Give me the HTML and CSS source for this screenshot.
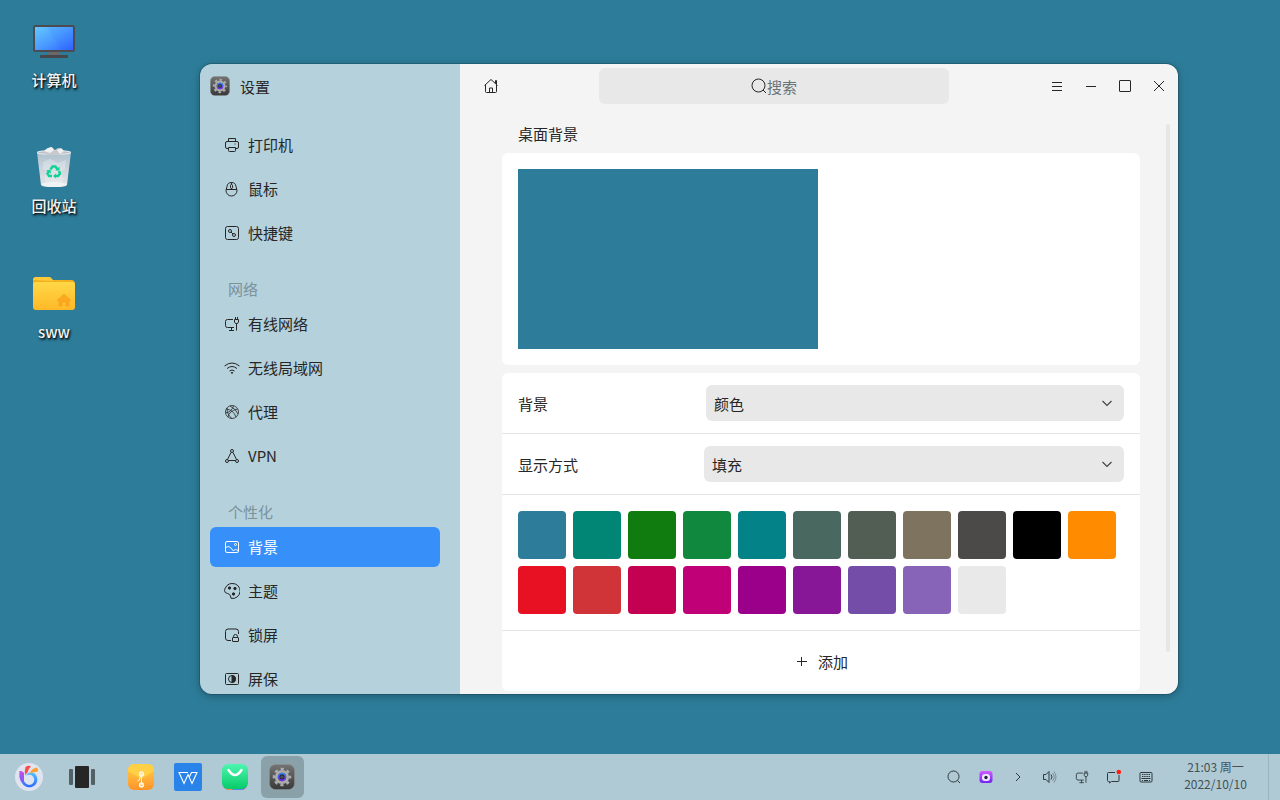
FILE: index.html
```html
<!DOCTYPE html>
<html lang="zh-CN">
<head>
<meta charset="utf-8">
<meta name="viewport" content="width=device-width, initial-scale=1">
<title>设置</title>
<link rel="stylesheet" href="styles.css">
</head>
<body>
<svg class="defs" width="0" height="0" aria-hidden="true">
  <defs>
    <linearGradient id="screen" x1="0" y1="0" x2="1" y2="1"><stop offset="0" stop-color="#66c8ff"/><stop offset=".5" stop-color="#4b9cff"/><stop offset="1" stop-color="#2f62ff"/></linearGradient>
    <linearGradient id="folder" x1="0" y1="0" x2="0" y2="1"><stop offset="0" stop-color="#ffd847"/><stop offset="1" stop-color="#ffb827"/></linearGradient>
    <linearGradient id="bin" x1="0" y1="0" x2="0" y2="1"><stop offset="0" stop-color="#a9bfcc"/><stop offset=".5" stop-color="#ccd4dc"/><stop offset="1" stop-color="#e4e6ea"/></linearGradient>
    <linearGradient id="plate" x1="0" y1="0" x2="0" y2="1"><stop offset="0" stop-color="#747474"/><stop offset="1" stop-color="#383838"/></linearGradient>
    <linearGradient id="lens" x1="0" y1="0" x2="0" y2="1"><stop offset="0" stop-color="#2e83ff"/><stop offset="1" stop-color="#7a2bff"/></linearGradient>
    <linearGradient id="shop" x1="0" y1="0" x2="0" y2="1"><stop offset="0" stop-color="#4ef5b0"/><stop offset="1" stop-color="#07cb69"/></linearGradient>
    <linearGradient id="cam" x1="0" y1="0" x2="0" y2="1"><stop offset="0" stop-color="#cf5cff"/><stop offset="1" stop-color="#7222ee"/></linearGradient>
    <linearGradient id="files" x1="0" y1="0" x2="0" y2="1"><stop offset="0" stop-color="#ffd34a"/><stop offset="1" stop-color="#ff9329"/></linearGradient>
    <linearGradient id="swirl" x1="0" y1="0" x2="0" y2="1"><stop offset="0" stop-color="#55c6ff"/><stop offset="1" stop-color="#2a67ff"/></linearGradient>
    <linearGradient id="petal" x1="0" y1="0" x2="0" y2="1"><stop offset="0" stop-color="#c64be8"/><stop offset="1" stop-color="#4f6bff"/></linearGradient>
    <symbol id="gear-app" viewBox="0 0 26 26">
      <rect x=".5" y=".5" width="25" height="25" rx="6" fill="url(#plate)" stroke="#8c8c8c" stroke-opacity=".6"/>
      <circle cx="13" cy="13" r="8" fill="none" stroke="#acacac" stroke-width="2.600" stroke-dasharray="3.140 3.140" stroke-dashoffset="1.570"/>
      <circle cx="13" cy="13" r="5.700" fill="#3b3b42" stroke="#acacac" stroke-width="2.800"/>
      <circle cx="13" cy="13" r="3.400" fill="#292c3c" stroke="url(#lens)" stroke-width="1.500"/>
      <circle cx="13" cy="13" r="1.600" fill="#4b4b56"/>
    </symbol>
    <symbol id="wired" viewBox="0 0 16 16">
      <path d="M9 3.500H3.500a2 2 0 0 0-2 2v4a2 2 0 0 0 2 2H10M7.500 11.500v3M5 14.500h5M12.500 7.500v7M10.500 3.500h4v2.500l-1 1.500h-2l-1-1.500zM11.500 1v2.500M13.500 1v2.500"/>
    </symbol>
  </defs>
</svg>

<main class="desktop">
  <div class="shortcuts">
    <a class="shortcut" href="#computer">
      <svg width="44" height="44" viewBox="0 0 44 44" aria-hidden="true"><path d="M18 31h8l3 4H15z" fill="#6a686b"/><rect x="8" y="35" width="28" height="3" rx="1" fill="#45474b"/><rect x="1" y="5" width="42" height="27" rx="2.500" fill="#4c4c50"/><rect x="3" y="7" width="38" height="23" rx=".5" fill="url(#screen)"/><path d="M15 7h26v23H29z" fill="#275fff" opacity=".1"/></svg>
      <span>计算机</span>
    </a>
    <a class="shortcut" href="#trash">
      <svg width="44" height="44" viewBox="0 0 44 44" aria-hidden="true"><path d="M5 6q17-3 34 0l-4 33q-1 2-13 2T9 39z" fill="url(#bin)"/><path d="M11 16l7-3 8 4 8-3-1 9-7 5 6 4-2 5H14l-2-7 6-3-7-4z" fill="#f2f3f5" opacity=".35"/><path d="M9 38q13-4 26 0-1 3-13 3T9 38z" fill="#f1f2f4"/><ellipse cx="22" cy="6.500" rx="17" ry="2" fill="#b9c1c8" stroke="#e8edf0"/><path d="M12 6l2-3 5-2 4 3 3-2 4 1 3 4-6 2H14z" fill="#c9cacd"/><path d="M12 5l4-3 4-1 2 3-4 3zM25 4l4-2 3 3-4 3z" fill="#f0f0f1"/><g fill="none" stroke="#10d495" stroke-width="2.400"><path d="M18.500 23.500l2-3h3l2 3M27 25l1 2.500-2 2.500h-3M20 30h-3l-1.500-2.500L17 25"/></g><path d="M27.500 20.500v4h-4zM24 27.500v5L21 30zM14 24.500l4.500-1 .5 4z" fill="#10d495"/></svg>
      <span>回收站</span>
    </a>
    <a class="shortcut" href="#home">
      <svg width="44" height="44" viewBox="0 0 44 44" aria-hidden="true"><path d="M1 9a4 4 0 0 1 4-4h12q2 0 4 3h18a4 4 0 0 1 4 4v8H1z" fill="#f6b21e"/><path d="M1 8a3 3 0 0 1 3-3h13q2 0 4 4z" fill="#ffc938"/><rect x="1" y="10" width="42" height="28" rx="3" fill="url(#folder)"/><path d="M25 28.500L32 22l7 6.500h-2V34h-3v-4h-4v4h-3v-5.500z" fill="#fca91e" stroke="#f0a020" stroke-width=".6"/></svg>
      <span>sww</span>
    </a>
  </div>

  <section class="window" aria-label="设置">
    <aside class="sidebar">
      <header class="app-title"><svg width="20" height="20" aria-hidden="true"><use href="#gear-app"/></svg><h1>设置</h1></header>
      <nav class="nav">
        <ul>
          <li><a href="#printer"><svg class="icon" viewBox="0 0 16 16"><path d="M4.500 5V1.500h7V5M4 11.500H3A1.500 1.500 0 0 1 1.500 10V6A1.500 1.500 0 0 1 3 4.500h10A1.500 1.500 0 0 1 14.500 6v4a1.500 1.500 0 0 1-1.500 1.500h-1M4.500 10.500h7v3a1 1 0 0 1-1 1h-5a1 1 0 0 1-1-1zM11 6.500v1"/></svg>打印机</a></li>
          <li><a href="#mouse"><svg class="icon" viewBox="0 0 16 16"><path d="M2 8.500h11M7.500 1.500a4.500 4.500 0 0 1 4.500 4l1 4a5.500 5.500 0 0 1-11 0l1-4a4.500 4.500 0 0 1 4.500-4zM7.500 1.500v2m0 3.500v1.500"/><rect x="6.500" y="3.500" width="2" height="4" rx="1"/></svg>鼠标</a></li>
          <li><a href="#shortcut"><svg class="icon" viewBox="0 0 16 16"><rect x="1.500" y="1.500" width="13" height="13" rx="2"/><circle cx="6" cy="6" r="1.500"/><circle cx="10" cy="10" r="1.500"/><path d="M7 7l2 2"/></svg>快捷键</a></li>
        </ul>
        <h2>网络</h2>
        <ul>
          <li><a href="#wired-net"><svg class="icon"><use href="#wired"/></svg>有线网络</a></li>
          <li><a href="#wlan"><svg class="icon" viewBox="0 0 16 16"><path d="M.5 6q7.500-6 15 0M3 8.500q5-4 10 0M5.500 11q2.500-2 5 0"/><circle cx="8" cy="12.800" r=".6" fill="currentColor"/></svg>无线局域网</a></li>
          <li><a href="#proxy"><svg class="icon thin" viewBox="0 0 16 16"><circle cx="8" cy="8" r="6.500"/><path d="M2.500 5q7 1 9.500 8M4 13q1-6 9.500-8M6 2q6 3 8 8M1.500 9q6-1 8-7M3 4q0 7 5 10.500"/></svg>代理</a></li>
          <li><a href="#vpn"><svg class="icon" viewBox="0 0 16 16"><circle cx="8" cy="3" r="1.500"/><circle cx="3" cy="13" r="1.500"/><circle cx="13" cy="13" r="1.500"/><path d="M7 4.500L3.500 11.500M9 4.500l3.500 7M4.500 12.500h7"/></svg>VPN</a></li>
        </ul>
        <h2>个性化</h2>
        <ul>
          <li><a class="active" href="#background" aria-current="page"><svg class="icon" viewBox="0 0 16 16"><rect x="1.500" y="2.500" width="13" height="11" rx="1.500"/><path d="M1.500 8.500q3-2 5 0l3 3.500 2-2 1.500 1.500 1.500-1"/><circle cx="11.500" cy="5.500" r="1"/></svg>背景</a></li>
          <li><a href="#theme"><svg class="icon" viewBox="0 0 16 16"><path d="M3 2.500A7 7 0 0 1 8 .5a7.500 7.500 0 1 1-1 14.800L6.500 13q-.5-2-3-2.500Q.5 10 .5 7.500q0-2 2.500-5z"/><g fill="currentColor"><circle cx="5.500" cy="5" r="1.200"/><circle cx="11" cy="5.500" r="1.200"/><circle cx="9.500" cy="11" r="1.200"/></g></svg>主题</a></li>
          <li><a href="#lock"><svg class="icon" viewBox="0 0 16 16"><path d="M7 13.500H4A2.500 2.500 0 0 1 1.500 11V4.500A2.500 2.500 0 0 1 4 2h8a2.500 2.500 0 0 1 2.500 2.500V7"/><rect x="8.500" y="10.500" width="6" height="4" rx=".5"/><path d="M9.500 10.500v-1a2 2 0 0 1 4 0v1"/></svg>锁屏</a></li>
          <li><a href="#screensaver"><svg class="icon" viewBox="0 0 16 16"><rect x="1.500" y="2.500" width="13" height="11" rx="1"/><circle cx="8" cy="8" r="3.500"/><path d="M8 4.500a3.500 3.500 0 0 1 0 7z" fill="currentColor"/></svg>屏保</a></li>
        </ul>
      </nav>
    </aside>

    <div class="content">
      <header class="toolbar">
        <button type="button" class="tool" aria-label="主页"><svg class="icon" viewBox="0 0 16 16"><path d="M1.500 7.500L8 1.500l6.500 6M2.500 7v6.500a1 1 0 0 0 1 1h9a1 1 0 0 0 1-1V7M6.500 14.500V10h3v4.500M12.500 5V2.500h1V6"/></svg></button>
        <label class="search"><svg class="icon" viewBox="0 0 16 16"><circle cx="7.500" cy="7.500" r="6.500"/><path d="M12 12l3 3"/></svg><input type="text" placeholder="搜索" aria-label="搜索"></label>
        <div class="controls">
          <button type="button" class="tool" aria-label="菜单"><svg class="icon" viewBox="0 0 16 16"><path d="M3 4.500h10M3 8.500h10M3 12.500h10"/></svg></button>
          <button type="button" class="tool" aria-label="最小化"><svg class="icon" viewBox="0 0 16 16"><path d="M3 8.500h10"/></svg></button>
          <button type="button" class="tool" aria-label="最大化"><svg class="icon" viewBox="0 0 16 16"><rect x="2.500" y="2.500" width="11" height="11" rx=".5"/></svg></button>
          <button type="button" class="tool" aria-label="关闭"><svg class="icon" viewBox="0 0 16 16"><path d="M3 3l10 10M13 3L3 13"/></svg></button>
        </div>
      </header>
      <div class="page">
        <h2 class="page-title">桌面背景</h2>
        <div class="card card-preview"><div class="preview"></div></div>
        <div class="card">
          <div class="row">
            <label for="bg">背景</label>
            <div class="select"><select id="bg"><option>颜色</option></select><svg class="icon" viewBox="0 0 16 16"><path d="M3.500 6L8 10.500 12.500 6"/></svg></div>
          </div>
          <div class="row row-mode">
            <label for="mode">显示方式</label>
            <div class="select"><select id="mode"><option>填充</option></select><svg class="icon" viewBox="0 0 16 16"><path d="M3.500 6L8 10.500 12.500 6"/></svg></div>
          </div>
          <div class="swatches">
            <button type="button" aria-label="#2d7d9a" style="background:#2d7d9a"></button>
            <button type="button" aria-label="#018574" style="background:#018574"></button>
            <button type="button" aria-label="#107c10" style="background:#107c10"></button>
            <button type="button" aria-label="#10893e" style="background:#10893e"></button>
            <button type="button" aria-label="#038387" style="background:#038387"></button>
            <button type="button" aria-label="#486860" style="background:#486860"></button>
            <button type="button" aria-label="#525e54" style="background:#525e54"></button>
            <button type="button" aria-label="#7e735f" style="background:#7e735f"></button>
            <button type="button" aria-label="#4c4a48" style="background:#4c4a48"></button>
            <button type="button" aria-label="#000000" style="background:#000000"></button>
            <button type="button" aria-label="#ff8c00" style="background:#ff8c00"></button>
            <button type="button" aria-label="#e81123" style="background:#e81123"></button>
            <button type="button" aria-label="#d13438" style="background:#d13438"></button>
            <button type="button" aria-label="#c30052" style="background:#c30052"></button>
            <button type="button" aria-label="#bf0077" style="background:#bf0077"></button>
            <button type="button" aria-label="#9a0089" style="background:#9a0089"></button>
            <button type="button" aria-label="#881798" style="background:#881798"></button>
            <button type="button" aria-label="#744da9" style="background:#744da9"></button>
            <button type="button" aria-label="#8764b8" style="background:#8764b8"></button>
            <button type="button" aria-label="#e9e9e9" style="background:#e9e9e9"></button>
          </div>
          <button type="button" class="add"><svg class="icon" viewBox="0 0 16 16"><path d="M3 7.500h10M7.500 3v9"/></svg>添加</button>
        </div>
      </div>
      <div class="scrollbar"></div>
    </div>
  </section>
</main>

<footer class="taskbar">
  <div class="launchers">
    <button type="button" class="launcher" aria-label="开始菜单"><svg width="28" height="28" viewBox="0 0 28 28"><circle cx="14" cy="14" r="14" fill="#e0e4ee"/><path d="M4.500 8q3-.5 4.500 2v8l3 6Q3 20 4.500 8z" fill="url(#petal)"/><path d="M14 9.500h4a7.800 7.800 0 1 1-11 9q1.500 1 3 1a5 5 0 1 0 1-6.500q1-2.500 3-3.500z" fill="url(#swirl)"/><path d="M10.500 4q3-2 5.500-.5-3 2.500-3.500 6L10 12Q9.500 7 10.500 4z" fill="#ff4b45"/><path d="M22 4.500q2 2.500 0 4.500-4-.5-7 1.500 1-5 7-6z" fill="#ff9f36"/></svg></button>
    <button type="button" class="launcher task-view" aria-label="任务视图"><svg width="28" height="28" viewBox="0 0 28 28"><rect x="1" y="6" width="4" height="16" rx="1" fill="#536166"/><rect x="7" y="3" width="14" height="22" rx="1" fill="#262626"/><rect x="23" y="6" width="4" height="16" rx="1" fill="#536166"/></svg></button>
    <button type="button" class="launcher files" aria-label="文件管理器"><svg width="28" height="28" viewBox="0 0 28 28"><rect x="1" y="1" width="26" height="26" rx="6" fill="url(#files)"/><path d="M1 9l13 7 13-7V7a6 6 0 0 0-6-6H7a6 6 0 0 0-6 6z" fill="#ffcf45"/><path d="M1 9l13 7 13-7" fill="none" stroke="#ffb735"/><path d="M14.500 11v11M13.500 12l-1 5-2 1" fill="none" stroke="#fff4dc"/><circle cx="14.500" cy="11" r="1.800" fill="none" stroke="#fff4dc" stroke-width="1.700"/><circle cx="14.500" cy="22" r="1.800" fill="none" stroke="#fff4dc" stroke-width="1.700"/></svg></button>
    <button type="button" class="launcher" aria-label="WPS"><svg width="28" height="28" viewBox="0 0 28 28"><rect width="28" height="28" rx="2" fill="#2a83e8"/><path d="M14 9.500H5l5 11 4-9 4 9 5-11h-5.500l-2.500 5" fill="none" stroke="#fff" stroke-width="1.100"/></svg></button>
    <button type="button" class="launcher" aria-label="软件商店"><svg width="28" height="28" viewBox="0 0 28 28"><rect x="2" y="2" width="24" height="25" rx="6" fill="#4b8fe8"/><path d="M2 19v2a6 6 0 0 0 6 6h4z" fill="#ff8c45"/><path d="M26 19v2a6 6 0 0 1-5 6z" fill="#a94ee6"/><rect x="1" y="1" width="26" height="25" rx="6" fill="url(#shop)"/><path d="M7.500 7q6.500 10 13 0" fill="none" stroke="#fff" stroke-width="2.500" stroke-linecap="round"/></svg></button>
    <button type="button" class="launcher running" aria-label="设置"><svg width="26" height="26"><use href="#gear-app"/></svg></button>
  </div>
  <div class="tray">
    <button type="button" aria-label="全局搜索"><svg class="icon" viewBox="0 0 16 16"><circle cx="7.500" cy="7.500" r="5.500"/><path d="M11.500 11.500l2.500 2.500"/></svg></button>
    <button type="button" aria-label="截图"><svg width="16" height="16" viewBox="0 0 16 16"><rect x="1.500" y="2" width="13" height="12" rx="3" fill="url(#cam)"/><rect x="4" y="5" width="8" height="7" rx="3" fill="#efe6ff"/><circle cx="8" cy="8.500" r="1.700" fill="#24203a"/></svg></button>
    <button type="button" aria-label="展开"><svg class="icon" viewBox="0 0 16 16"><path d="M6 4l4 4-4 4"/></svg></button>
    <button type="button" aria-label="音量"><svg class="icon" viewBox="0 0 16 16"><path d="M1.500 5.500H4l3-3v11l-3-3H1.500z"/><path d="M9 5.500q2 2.500 0 5"/><path d="M10.500 4q3.500 4 0 8M12 2.500q4 5.500 0 11" opacity=".4"/></svg></button>
    <button type="button" aria-label="网络"><svg class="icon small"><use href="#wired"/></svg></button>
    <button type="button" aria-label="通知"><svg class="icon" viewBox="0 0 16 16"><path d="M9 3.500H2.500a1 1 0 0 0-1 1v7a1 1 0 0 0 1 1h1V14l2-1.500H12a1 1 0 0 0 1-1V6"/><circle cx="12.800" cy="3" r="2.300" fill="#ff1d0d" stroke="none"/></svg></button>
    <button type="button" aria-label="键盘"><svg class="icon" viewBox="0 0 16 16"><rect x="2" y="3.500" width="12" height="9.500" rx="1"/><path d="M4 5.500h8M4 7.500h8" stroke-dasharray="1.500 .7"/><path d="M3.500 9.500h9M4 11.500h1m1 0h4m1 0h1"/></svg></button>
    <button type="button" class="clock"><time datetime="2022-10-10T21:03">21:03 周一<br>2022/10/10</time></button>
    <button type="button" class="show-desktop" aria-label="显示桌面"></button>
  </div>
</footer>
</body>
</html>
```
FILE: styles.css
```css
* { box-sizing: border-box; }

body {
  margin: 0;
  height: 100vh;
  display: flex;
  flex-direction: column;
  overflow: hidden;
  background: #2d7d9a;
  color: #262626;
  font: 15px/24px "Noto Sans CJK SC", sans-serif;
}

h1, h2, ul { margin: 0; padding: 0; font-size: 15px; font-weight: 400; list-style: none; }
a { color: inherit; text-decoration: none; }
button, input, select { margin: 0; padding: 0; border: 0; background: none; color: inherit; font: inherit; }
svg { display: block; flex: none; }
.defs { position: absolute; }
.icon { width: 16px; height: 16px; fill: none; stroke: currentColor; stroke-width: 1; }
.icon.small { width: 14px; height: 14px; }
.icon.thin { stroke-width: .8; }

.desktop { position: relative; flex: 1; min-height: 0; }

.shortcuts { display: flex; flex-direction: column; gap: 54px; width: 108px; padding-top: 20px; }
.shortcut {
  display: flex;
  flex-direction: column;
  align-items: center;
  gap: 4px;
  color: #f2f2f2;
  font-weight: 500;
  text-shadow: 1px 1px 2px rgba(0, 0, 0, .9), 1px 2px 3px rgba(0, 0, 0, .6);
}

.window {
  position: absolute;
  inset: 64px 102px 60px 200px;
  display: flex;
  overflow: hidden;
  border-radius: 12px;
  box-shadow: 0 0 0 1px rgba(20, 60, 80, .35), 0 2px 10px rgba(0, 0, 0, .3);
}

.sidebar { display: flex; flex-direction: column; width: 260px; background: #b5d1dc; }
.app-title { display: flex; align-items: center; gap: 10px; height: 44px; padding: 0 10px; }
.app-title h1, .row label { padding-top: 2px; }
.nav { flex: 1; min-height: 0; overflow: hidden; padding: 17px 20px 0 10px; font-weight: 500; }
.nav ul { display: flex; flex-direction: column; gap: 4px; }
.nav a { display: flex; align-items: center; gap: 8px; height: 40px; padding: 0 14px; border-radius: 6px; }
.nav .active { background: #3790fa; color: #fff; }
.nav h2 { margin-top: 20px; padding-left: 18px; color: #7b929b; line-height: 31px; }

.content { position: relative; display: flex; flex: 1; flex-direction: column; min-width: 0; background: #f4f4f4; }
.toolbar { display: flex; align-items: center; justify-content: space-between; height: 44px; padding: 0 2px 0 14px; }
.tool { display: grid; place-items: center; width: 34px; height: 34px; }
.controls { display: flex; }
.search {
  display: flex;
  align-items: center;
  justify-content: center;
  width: 350px;
  height: 36px;
  border-radius: 6px;
  background: #e8e8e8;
}
.search input { width: 30px; padding-top: 2px; outline: 0; }
.search input::placeholder { color: #6a7376; opacity: 1; }

.page { flex: 1; min-height: 0; overflow: hidden; padding: 0 38px 0 42px; }
.page-title { padding: 14px 16px 7px; }
.card { border-radius: 6px; background: #fff; }
.card-preview { margin-bottom: 8px; padding: 16px; }
.preview { width: 300px; height: 180px; background: #2d7d9a; }

.row { display: grid; grid-template-columns: 188px 1fr; align-items: center; padding: 12px 16px; border-bottom: 1px solid #e4e4e4; }
.row-mode { grid-template-columns: 186px 1fr; }
.select { display: grid; align-items: center; border-radius: 6px; background: #e8e8e8; }
.select > * { grid-area: 1 / 1; }
.select select { appearance: none; height: 36px; padding: 2px 8px 0; }
.select .icon { justify-self: end; margin-right: 9px; color: #444; stroke-width: 1.2; pointer-events: none; }

.swatches { display: flex; flex-wrap: wrap; gap: 7px; padding: 16px; border-bottom: 1px solid #e4e4e4; }
.swatches button { width: 48px; height: 48px; border-radius: 4px; }
.add { display: flex; align-items: center; justify-content: center; gap: 8px; width: 100%; height: 60px; padding-top: 2px; }
.scrollbar { position: absolute; top: 60px; right: 8px; bottom: 42px; width: 4px; border-radius: 2px; background: #e6e6e6; }

.taskbar { display: flex; justify-content: space-between; height: 46px; background: #afcad5; }
.launchers { display: flex; align-items: center; gap: 4px; padding-left: 8px; }
.launcher { display: grid; place-items: center; width: 43px; height: 42px; padding-right: 1px; border-radius: 6px; }
.task-view { margin-left: 6px; }
.files { margin-left: 12px; }
.running { background: #8ba1aa; }
.tray { display: flex; color: #2f383c; }
.tray button { display: grid; place-items: center; width: 32px; }
.tray .clock { width: 106px; padding: 0 0 4px 1px; color: #455157; font-size: 12px; line-height: 17px; }
.tray .show-desktop { width: 12px; border-left: 1px solid #9ab3bd; }
```
